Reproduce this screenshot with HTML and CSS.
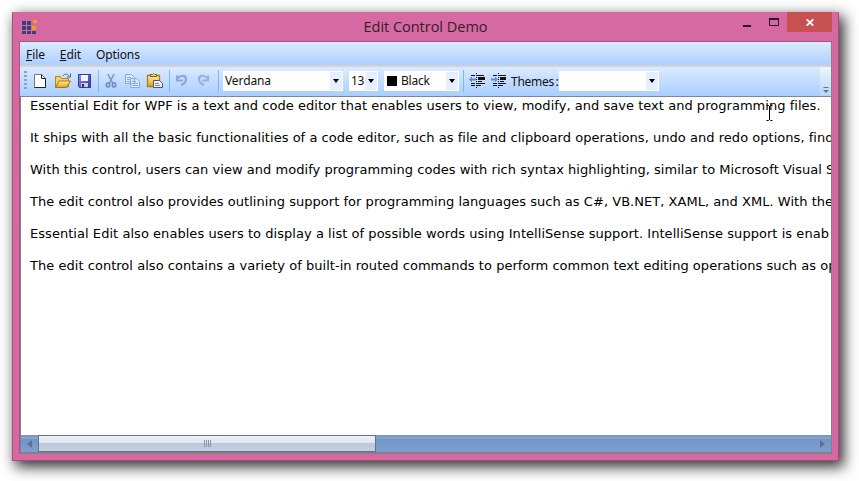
FILE: index.html
```html
<!DOCTYPE html>
<html lang="en">
<head>
<meta charset="utf-8">
<title>Edit Control Demo</title>
<link rel="stylesheet" href="styles.css">
</head>
<body>
<div class="window">
  <header class="titlebar">
    <svg class="logo" width="17" height="16" viewBox="0 0 17 16"><g fill="#34437c"><path d="M0 2h4v4H0zM5 2h4v4H5zM0 7h4v4H0zM5 7h4v4H5zM0 12h4v3H0zM5 12h4v3H5zM10 12h4v3h-4z"/></g><path fill="#f19a2c" d="M10 7h4v4h-4zM13 0l3 2.500-3 2.500-3-2.500z"/></svg>
    <h1 class="title">Edit Control Demo</h1>
    <div class="controls">
      <svg class="minmax" width="36" height="20" viewBox="0 0 36 20"><path fill="#2b1721" d="M0 12h8v2H0z"/><path fill="none" stroke="#2b1721" d="M26.500 6.500h9v6h-9z"/><path fill="#2b1721" d="M26 5h10v2H26z"/></svg>
      <div class="close"><svg width="8" height="7" viewBox="0 0 8 7"><path d="M.7.300l6.600 6.400M7.300.300L.7 6.700" stroke="#fff" stroke-width="1.800"/></svg></div>
    </div>
  </header>
  <main class="client">
    <nav class="menu"><span><u>F</u>ile</span><span><u>E</u>dit</span><span>Options</span></nav>
    <div class="toolbar">
      <div class="grip"></div>
      <svg class="icons" width="206" height="29" viewBox="0 0 206 29">
        <defs>
          <linearGradient id="gold" x2="0" y2="1"><stop stop-color="#fff0a0"/><stop offset="1" stop-color="#e1a018"/></linearGradient>
          <linearGradient id="disk" x2="1" y2="1"><stop stop-color="#8f97ed"/><stop offset="1" stop-color="#3532a0"/></linearGradient>
        </defs>
        <path d="M3.500 7.500h7l4 4v9h-11z" fill="#fff" stroke="#777"/><path d="M14.500 11.500v9H3.500M10.500 7.500v4h4" fill="none" stroke="#222"/>
        <path d="M24.500 20V9.500h5l1 2h7V20z" fill="#f4cf68" stroke="#b58722"/><path d="M24.500 20.500l3.500-6.500h11.500l-4 6.500z" fill="url(#gold)" stroke="#a87518"/><path d="M32 9c2-3 5-2.500 6 .5M39.500 6.500V10H36" fill="none" stroke="#52698b"/>
        <path d="M47.500 7.500h12v13h-11l-1-1z" fill="url(#disk)" stroke="#3b3995"/><path d="M50 8h7v6h-7z" fill="#f2f4fd"/><path d="M50 16h7v4h-7z" fill="#c9cce8"/><path d="M51 17h2v3h-2z" fill="#272678"/>
        <path d="M67.500 3v22" stroke="#78bce9"/>
        <g fill="none" stroke="#8399bd"><path d="M77 7l5 10M83 7l-5 10" stroke-width="1.600"/><ellipse cx="77" cy="18" rx="1.700" ry="2" stroke="#6688cc" stroke-width="1.500"/><ellipse cx="83" cy="18" rx="1.700" ry="2" stroke="#6688cc" stroke-width="1.500"/></g>
        <g fill="#dce9fb" stroke="#89a8dc"><path d="M94.500 7.500h6l3 3v6h-9zM99.500 11.500h6l3 3v6h-9z"/><path d="M96 10.500h4M96 12.500h3M96 14.500h3M101 14.500h4M101 16.500h6M101 18.500h6"/></g>
        <path d="M116.500 8.500h12v11h-12z" fill="url(#gold)" stroke="#b17a14" stroke-width="1.300"/><path d="M119.500 9.500v-2h2l1-1 1 1h2v2z" fill="#eee0a5" stroke="#735c24"/><path d="M122.500 13.500h6l3 3v4h-9z" fill="#eef3fb" stroke="#4e5668"/><path d="M124 16.500h4M124 18.500h5" stroke="#73849f"/>
        <path d="M138.500 3v22" stroke="#78bce9"/>
        <path d="M147 11c4-4 8-2 8 1 0 3-2 5-5 6M146 8.500v5h6" fill="none" stroke="#87a7e2" stroke-width="2.200"/>
        <path d="M176 11c-4-4-8-2-8 1 0 3 2 5 5 6M177 8.500v5h-6" fill="none" stroke="#93b1e5" stroke-width="2.200"/>
        <path d="M187.500 3v22" stroke="#78bce9"/>
      </svg>
      <div class="combo font"><span>Verdana</span><i></i></div>
      <div class="combo size"><span>13</span><i></i></div>
      <div class="combo color"><b></b><span>Black</span><i></i></div>
      <svg class="indents" width="46" height="29" viewBox="0 0 46 29"><path d="M3.500 3v22" stroke="#78bce9"/>
        <g id="indent-lines" stroke="#111"><path d="M11 8.500h4M16 8.500h8M18 10.500h7M18 14.500h4M11 16.500h4M16 16.500h9M11 18.500h4M16 18.500h5"/><path d="M16.500 6v15" stroke-dasharray="1 1"/><path d="M18 12h7" stroke-width="2"/></g>
        <path d="M9 12.500l3-3v2h4v2h-4v2z" fill="#5e8ad9"/>
        <use href="#indent-lines" x="22"/><path d="M38 12.500l-3-3v2h-4v2h4v2z" fill="#5e8ad9"/></svg>
      <span class="label">Themes :</span>
      <div class="combo theme"><span></span><i></i></div>
      <div class="overflow"><svg width="6" height="7" viewBox="0 0 6 7"><path d="M.5 0h5v1h-5zM0 3h6L3 6z" fill="#6b7685"/></svg></div>
    </div>
    <section class="editor">
      <p>Essential Edit for WPF is a text and code editor that enables users to view, modify, and save text and programming files.</p>
      <p>It ships with all the basic functionalities of a code editor, such as file and clipboard operations, undo and redo options, find</p>
      <p>With this control, users can view and modify programming codes with rich syntax highlighting, similar to Microsoft Visual S</p>
      <p>The edit control also provides outlining support for programming languages such as C#, VB.NET, XAML, and XML. With the</p>
      <p class="wide">Essential Edit also enables users to display a list of possible words using IntelliSense support. IntelliSense support is enab</p>
      <p>The edit control also contains a variety of built-in routed commands to perform common text editing operations such as op</p>
      <svg class="ibeam" width="8" height="16" viewBox="0 0 8 16"><path d="M.5.500h2l1 1 1-1h2M3.500 1v14M.5 15.500h2l1-1 1 1h2" fill="none" stroke="#000"/></svg>
    </section>
    <div class="scrollbar">
      <svg class="arrow" width="5" height="8"><path d="M5 0v8L0 4z" fill="#5b709b"/></svg>
      <div class="thumb"><div class="ticks"></div></div>
      <svg class="arrow right" width="5" height="8"><path d="M0 0v8l5-4z" fill="#5b709b"/></svg>
    </div>
  </main>
</div>
</body>
</html>
```
FILE: styles.css
```css
* { box-sizing: border-box; }
body { margin: 0; width: 859px; height: 481px; padding: 12px; overflow: hidden; background: #fff; font: 12px "Noto Sans", sans-serif; color: #111; }
.window { width: 827px; height: 449px; padding: 0 7px 6px; background: #d669a2; border: 1px solid #ab4c7d; border-top-color: #d669a2; box-shadow: 4px 5px 13px 1px rgba(0,0,0,.8); }
.titlebar { height: 28px; display: grid; grid-template-columns: 120px 1fr 120px; }
.logo { margin: 6px 0 0 2px; }
.title { margin: 0; text-align: center; font: 14.500px/28px "Open Sans", sans-serif; color: #361c2a; letter-spacing: -.02px; }
.controls { display: flex; justify-content: flex-end; margin-right: -1px; }
.minmax { margin-right: 8px; }
.close { width: 45px; height: 20px; margin-top: -1px; display: flex; align-items: center; justify-content: center; background: #c75050; }
.close svg { margin-top: 1px; }
.client { width: 813px; height: 413px; margin-left: -1px; border: 1px solid #a65483; border-right-color: #858087; border-bottom: 2px solid #858087; background: #fff; display: flex; flex-direction: column; }
.menu { height: 23px; flex: none; display: flex; padding-left: 6px; gap: 15px; line-height: 25px; letter-spacing: -.1px; background: linear-gradient(#dceaff, #acd0ff); border-right: 1px solid #d6d3d1; }
.menu u { text-underline-offset: 1px; }
.toolbar { height: 32px; flex: none; display: flex; align-items: flex-start; border-top: 2px solid #d5d3d2; border-bottom: 1px solid #80868f; background: linear-gradient(#dceaff, #a9ceff); position: relative; }
.grip { width: 3px; height: 19px; margin: 4px 0 0 4px; background: repeating-linear-gradient(#86a5ce 0 2px, transparent 2px 4px); }
.icons { flex: none; margin-left: 4px; margin-right: -16px; }
.combo { height: 20px; margin-top: 4px; background: #fff; display: flex; align-items: center; line-height: 20px; flex: none; }
.combo span { flex: 1; padding-left: 2px; }
.combo i { width: 12px; height: 18px; margin-right: 1px; background: #e5efff; display: flex; align-items: center; justify-content: center; }
.combo i::after { content: ""; border: 3.500px solid transparent; border-top: 4px solid #000; border-bottom: 0; }
.font { width: 120px; margin-left: 2px; letter-spacing: -.1px; }
.size { width: 29px; margin-left: 6px; letter-spacing: -.3px; }
.color { width: 75px; margin-left: 6px; letter-spacing: -.2px; }
.color b { width: 10px; height: 10px; margin: 0 2px 0 3px; background: #000; }
.indents { margin-left: 1px; flex: none; }
.label { margin-left: 5px; width: 48px; line-height: 29px; white-space: nowrap; word-spacing: -1.500px; letter-spacing: -.25px; }
.theme { width: 100px; }
.overflow { position: absolute; right: 0; top: 0; width: 11px; height: 29px; background: linear-gradient(#f0f5fc, #b9d5fb); display: flex; align-items: flex-end; justify-content: center; padding-bottom: 2px; }
.editor { flex: 1; min-height: 0; overflow: hidden; border-left: 1px solid #858087; padding: 1px 0 0 9px; position: relative; font: 13px/16px "DejaVu Sans", sans-serif; letter-spacing: .034px; color: #000; white-space: nowrap; }
.editor p { margin: 0 0 16px; }
.editor .wide { letter-spacing: .045px; }
.ibeam { position: absolute; left: 745px; top: 8px; }
.scrollbar { height: 17px; flex: none; display: flex; align-items: center; background: linear-gradient(#7898c5 0 2px, #86a9d3 2px 3px, #7495c3 4px, #7c9fcd); border-left: 1px solid #858087; }
.arrow { margin-left: 6px; }
.thumb { width: 338px; height: 17px; margin-left: 6px; background: linear-gradient(#edf1f4, #e0e6ed 45%, #bbc8da 50%, #c4d0e0); border: 1px solid #5f7395; display: flex; align-items: center; justify-content: center; }
.ticks { width: 7px; height: 7px; background: repeating-linear-gradient(90deg, #8994a5 0 1px, transparent 1px 2px); }
.right { margin: 0 6px 0 auto; }
```
